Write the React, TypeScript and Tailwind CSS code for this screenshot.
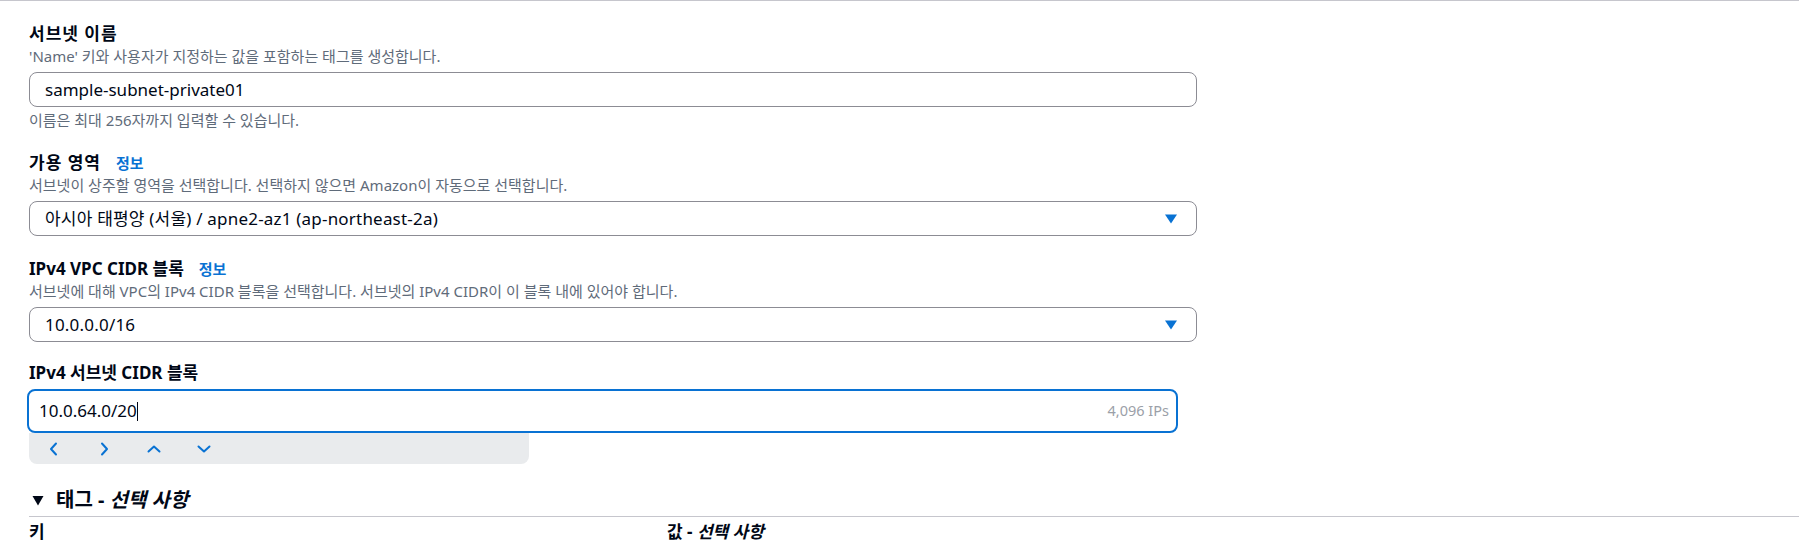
import React from 'react';

const font = { fontFamily: '"Noto Sans", "Noto Sans CJK KR", sans-serif' };

function Caret() {
  return (
    <svg width="14" height="12" viewBox="0 0 14 12" className="shrink-0">
      <path d="M1 1.5 H13 L7 10.5 Z" fill="#0972d3" />
    </svg>
  );
}

function Chevron({ dir }: { dir: 'left' | 'right' | 'up' | 'down' }) {
  const d = {
    left: 'M10 2.5 L5 8 L10 13.5',
    right: 'M6 2.5 L11 8 L6 13.5',
    up: 'M2.5 10.5 L8 5.5 L13.5 10.5',
    down: 'M2.5 5.5 L8 10.5 L13.5 5.5',
  }[dir];
  return (
    <svg width="16" height="16" viewBox="0 0 16 16">
      <path d={d} fill="none" stroke="#0972d3" strokeWidth="2" strokeLinecap="round" strokeLinejoin="round" />
    </svg>
  );
}

function Label({ text, info, wide }: { text: string; info?: boolean; wide?: boolean }) {
  return (
    <div className="flex items-center h-[22px] leading-[22px]">
      <span className={wide ? 'text-[17px] font-bold text-[#000716] tracking-[1px]' : 'text-[17px] font-bold text-[#000716]'}>
        {text}
      </span>
      {info && <span className="ml-[15px] text-[15px] font-bold text-[#0972d3]">정보</span>}
    </div>
  );
}

function Desc({ text }: { text: string }) {
  return <div className="mt-px text-[15px] leading-[20px] text-[#5f6b7a]">{text}</div>;
}

function TextBox({ value, select }: { value: string; select?: boolean }) {
  return (
    <div className="mt-[6px] w-[1168px] h-[35px] border border-[#8c8c94] rounded-lg flex items-center pl-[15px] pr-[18px] bg-white">
      <span className={select ? 'flex-1 text-[17px] text-[#000716] tracking-[0.2px]' : 'flex-1 text-[17px] text-[#000716]'}>
        {value}
      </span>
      {select && <Caret />}
    </div>
  );
}

export default function App() {
  return (
    <div className="bg-white min-h-screen border-t border-[#c6c6cd] overflow-hidden" style={font}>
      <div className="pl-[29px] pt-[22px]">
        <Label text="서브넷 이름" wide />
        <Desc text="'Name' 키와 사용자가 지정하는 값을 포함하는 태그를 생성합니다." />
        <TextBox value="sample-subnet-private01" />
        <div className="mt-[3px] text-[15px] leading-[20px] text-[#5f6b7a]">이름은 최대 256자까지 입력할 수 있습니다.</div>

        <div className="mt-[22px]">
          <Label text="가용 영역" info wide />
          <Desc text="서브넷이 상주할 영역을 선택합니다. 선택하지 않으면 Amazon이 자동으로 선택합니다." />
          <TextBox value="아시아 태평양 (서울) / apne2-az1 (ap-northeast-2a)" select />
        </div>

        <div className="mt-[22px]">
          <Label text="IPv4 VPC CIDR 블록" info />
          <Desc text="서브넷에 대해 VPC의 IPv4 CIDR 블록을 선택합니다. 서브넷의 IPv4 CIDR이 이 블록 내에 있어야 합니다." />
          <TextBox value="10.0.0.0/16" select />
        </div>

        <div className="mt-[20px]">
          <Label text="IPv4 서브넷 CIDR 블록" />
          <div className="mt-[5px] ml-[-2px] w-[1151px] h-[44px] border-2 border-[#0972d3] rounded-lg flex items-center pl-[10px] pr-[7px]">
            <span className="text-[17px] text-[#000716]">10.0.64.0/20</span>
            <span className="w-px h-[19px] bg-[#000716]" />
            <span className="ml-auto text-[14.5px] text-[#9ba0a8]">4,096 IPs</span>
          </div>
          <div className="w-[500px] h-[31px] bg-[#e9ebed] rounded-b-lg flex items-center">
            <div className="ml-[17px] flex items-center gap-[34px]">
              <Chevron dir="left" />
              <Chevron dir="right" />
              <Chevron dir="up" />
              <Chevron dir="down" />
            </div>
          </div>
        </div>

        <div className="mt-[23px] flex items-center h-[26px] border-b border-[#c6c6cd] box-content pb-[3px]">
          <svg width="12" height="11" viewBox="0 0 12 11" className="ml-[3px]">
            <path d="M0.5 1 H11.5 L6 10.5 Z" fill="#000716" />
          </svg>
          <span className="ml-[12px] text-[20px] font-bold text-[#000716]">
            태그 - <i>선택 사항</i>
          </span>
        </div>
        <div className="mt-[4px] flex h-[22px] leading-[22px] text-[17px] font-bold text-[#000716]">
          <span className="w-[638px]">키</span>
          <span>
            값 - <i>선택 사항</i>
          </span>
        </div>
      </div>
    </div>
  );
}
